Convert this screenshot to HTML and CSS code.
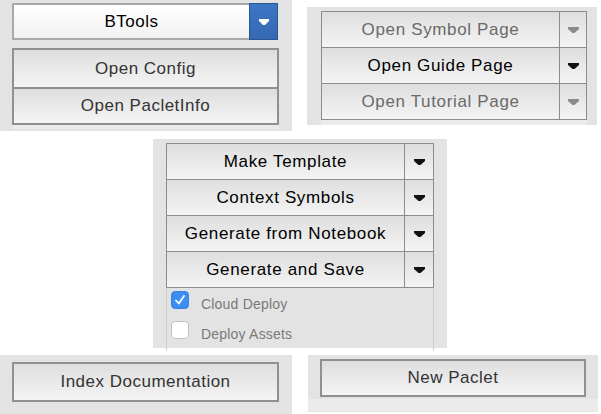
FILE: index.html
```html
<!DOCTYPE html>
<html>
<head>
<meta charset="utf-8">
<link rel="stylesheet" href="styles.css">
</head>
<body>
<div class="page">
  <div class="row row-top">
    <section class="panel p1">
      <div class="popup">
        <span class="popup-label">BTools</span>
        <span class="popup-arrow"><svg width="10" height="6" viewBox="0 0 10 6"><polygon points="0,0 10,0 10,2 6,6 4,6 0,2" fill="#fff"/></svg></span>
      </div>
      <div class="stack stack-thick">
        <div class="btn">Open Config</div>
        <div class="btn">Open PacletInfo</div>
      </div>
      <div class="well"></div>
    </section>
    <section class="panel p2">
      <div class="stack">
        <div class="split disabled"><span class="main">Open Symbol Page</span><span class="arrow"><svg width="11" height="6" viewBox="0 0 11 6"><polygon points="0,0 11,0 11,2 6.5,6 4.5,6 0,2"/></svg></span></div>
        <div class="split"><span class="main">Open Guide Page</span><span class="arrow"><svg width="11" height="6" viewBox="0 0 11 6"><polygon points="0,0 11,0 11,2 6.5,6 4.5,6 0,2"/></svg></span></div>
        <div class="split disabled"><span class="main">Open Tutorial Page</span><span class="arrow"><svg width="11" height="6" viewBox="0 0 11 6"><polygon points="0,0 11,0 11,2 6.5,6 4.5,6 0,2"/></svg></span></div>
      </div>
      <div class="well"></div>
    </section>
  </div>
  <div class="row row-mid">
    <section class="panel p3">
      <div class="stack">
        <div class="split"><span class="main">Make Template</span><span class="arrow"><svg width="11" height="6" viewBox="0 0 11 6"><polygon points="0,0 11,0 11,2 6.5,6 4.5,6 0,2"/></svg></span></div>
        <div class="split"><span class="main">Context Symbols</span><span class="arrow"><svg width="11" height="6" viewBox="0 0 11 6"><polygon points="0,0 11,0 11,2 6.5,6 4.5,6 0,2"/></svg></span></div>
        <div class="split"><span class="main">Generate from Notebook</span><span class="arrow"><svg width="11" height="6" viewBox="0 0 11 6"><polygon points="0,0 11,0 11,2 6.5,6 4.5,6 0,2"/></svg></span></div>
        <div class="split"><span class="main">Generate and Save</span><span class="arrow"><svg width="11" height="6" viewBox="0 0 11 6"><polygon points="0,0 11,0 11,2 6.5,6 4.5,6 0,2"/></svg></span></div>
      </div>
      <div class="checks">
        <div class="check-row"><span class="box checked"><svg width="18" height="18" viewBox="0 0 18 18"><path d="M5 9.5 L7.8 12.5 L13 5" fill="none" stroke="#fff" stroke-width="1.8" stroke-linecap="round" stroke-linejoin="round"/></svg></span><span class="check-label">Cloud Deploy</span></div>
        <div class="check-row"><span class="box"></span><span class="check-label">Deploy Assets</span></div>
      </div>
    </section>
  </div>
  <div class="row row-bot">
    <section class="panel p4">
      <div class="stack stack-thick">
        <div class="btn">Index Documentation</div>
      </div>
    </section>
    <section class="panel p5">
      <div class="stack stack-thick">
        <div class="btn">New Paclet</div>
      </div>
      <div class="well well-wide"></div>
    </section>
  </div>
</div>
</body>
</html>
```

FILE: styles.css
```css
* { box-sizing: border-box; }
html, body { margin: 0; padding: 0; background: #ffffff; }
body {
  font-family: "Liberation Sans", Arial, Helvetica, sans-serif;
  width: 601px;
  height: 414px;
  overflow: hidden;
}
.page { display: flex; flex-direction: column; }
.row { display: flex; align-items: flex-start; }
.row-mid { margin-top: 8px; }
.row-bot { margin-top: 7px; }

.panel {
  background: #e3e3e3;
  display: flex;
  flex-direction: column;
}
.p1 { width: 292px; height: 131px; padding: 3px 0 0 12px; }
.p2 { width: 290px; height: 118px; margin: 7px 0 0 15px; padding: 4px 0 0 14px; }
.p3 { width: 294px; height: 209px; margin-left: 153px; padding: 4px 0 0 13px; }
.p4 { width: 292px; height: 59px; padding: 7px 0 0 12px; }
.p5 { width: 290px; height: 57px; margin-left: 16px; padding: 4px 0 0 12px; }

/* popup menu */
.popup {
  width: 266px;
  height: 37px;
  display: flex;
  border: 2px solid #a9a9a9;
  background: linear-gradient(#ffffff, #f1f1f1);
  margin-bottom: 8px;
}
.popup-label {
  flex: 1;
  display: flex;
  align-items: center;
  justify-content: center;
  font-size: 17px;
  letter-spacing: 0.5px;
  color: #000;
}
.popup-arrow {
  width: 29px;
  margin: -2px -2px -2px 0;
  background: linear-gradient(#3d76c4, #3469b3);
  border: 1px solid #2b5696;
  display: flex;
  align-items: center;
  justify-content: center;
}

/* button stacks */
.stack {
  display: flex;
  flex-direction: column;
  border: 1px solid #8c8c8c;
}
.p1 .stack { width: 267px; }
.p2 .stack { width: 266px; }
.p3 .stack { width: 268px; }
.p4 .stack { width: 267px; }
.p5 .stack { width: 266px; }
.stack-thick { border-width: 2px; border-color: #909090; }

.btn {
  height: 37px;
  display: flex;
  align-items: center;
  justify-content: center;
  background: linear-gradient(#dedede, #f4f4f4);
  font-size: 17px;
  letter-spacing: 0.5px;
  color: #333;
}
.stack-thick .btn + .btn { border-top: 2px solid #909090; }
.p1 .btn:last-child { height: 36px; }
.p4 .btn { height: 36px; }
.p5 .btn { height: 34px; }

.split {
  height: 35px;
  display: flex;
  background: linear-gradient(#dedede, #f4f4f4);
}
.split + .split { border-top: 1px solid #8c8c8c; height: 36px; }
.split .main {
  flex: 1;
  display: flex;
  align-items: center;
  justify-content: center;
  font-size: 17px;
  letter-spacing: 0.65px;
  color: #000;
}
.split .arrow {
  display: flex;
  align-items: center;
  justify-content: center;
  border-left: 1px solid #8c8c8c;
  fill: #111;
}
.p2 .split .arrow { width: 27px; }
.p3 .split .arrow { width: 29px; }
.split.disabled .main { color: #6a6a6a; }
.split.disabled .arrow { fill: #8a8a8a; }

.well {
  height: 5px;
  background: #ebebeb;
}
.p1 .well { width: 267px; height: 4px; }
.p2 .well { width: 266px; height: 5px; }
.well-wide { margin: 2px 0 0 -12px; width: 290px; height: 12px; }

/* checkboxes */
.checks {
  width: 268px;
  flex: 1;
  border-left: 1px solid #cfcfcf;
  border-right: 1px solid #cfcfcf;
  padding: 3px 0 0 4px;
}
.check-row {
  height: 30px;
  font-size: 14px;
  color: #7a7a7a;
  letter-spacing: 0.2px;
}
.box {
  display: inline-block;
  width: 18px;
  height: 18px;
  border-radius: 4px;
  background: #fff;
  border: 1px solid #c2c2c2;
  vertical-align: baseline;
  margin-right: 12px;
}
.box svg { display: block; margin: -1px; }
.box.checked { background: #3d8ef2; border-color: #3a82de; }
.check-label { vertical-align: baseline; }
```
